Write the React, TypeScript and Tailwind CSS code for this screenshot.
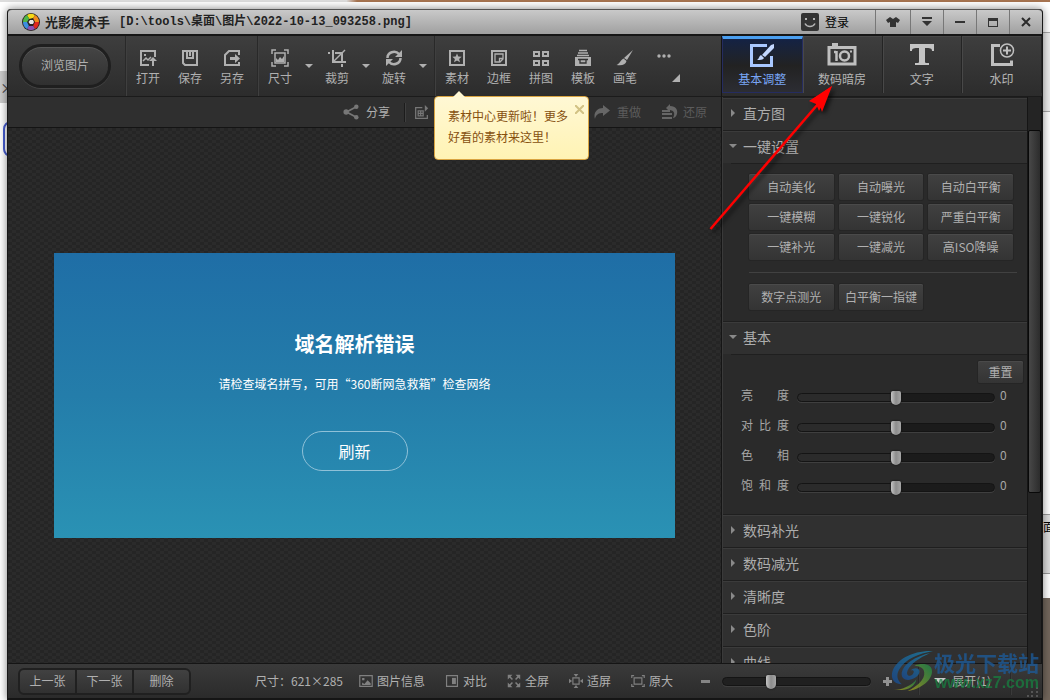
import type { ReactNode } from "react";

const font = "font-['Noto_Sans_CJK_SC','Liberation_Sans',sans-serif]";

function Glyph({ children, size = 18, className = "" }: { children: ReactNode; size?: number; className?: string }) {
  return (
    <svg width={size} height={size} viewBox="0 0 18 18" fill="none" stroke="currentColor" strokeWidth="2" className={className} aria-hidden="true">
      {children}
    </svg>
  );
}

const icons: Record<string, ReactNode> = {
  打开: (
    <>
      <path d="M10 16H2V2h14v6" />
      <path d="M4 12l3-3 2 2 3-3" strokeWidth="1.5" />
      <path d="M5 5h2v2H5zM14 8l4 4h-3v5h-2v-5h-3z" fill="currentColor" stroke="none" />
    </>
  ),
  保存: (
    <>
      <path d="M2 2h14v14H4l-2-2z" />
      <path d="M6 2v7h6V2M9 3v4" />
    </>
  ),
  另存: (
    <>
      <path d="M16 6V2H6L2 6v10h14v-3" />
      <path d="M7 8h5V5l5 4.500-5 4.500v-3H7z" fill="currentColor" stroke="none" />
    </>
  ),
  尺寸: (
    <>
      <path d="M1 5V1h4M13 1h4v4M17 13v4h-4M5 17H1v-4" strokeWidth="1.500" />
      <path d="M4 4h10v10H4z" strokeWidth="1.500" />
      <path d="M5 13V9l2 2 2-3 2 2 2-3v6z" fill="currentColor" stroke="none" />
    </>
  ),
  裁剪: (
    <>
      <path d="M0 4h2M5 1v12h13M7 4h7v9M14 15v3" />
      <path d="M5 13L17 1" strokeWidth="1.500" />
    </>
  ),
  旋转: (
    <>
      <path d="M2.500 9A6.500 6 0 0 1 14 5M15.500 9A6.500 6 0 0 1 4 13" strokeWidth="2.500" />
      <path d="M17 1v7h-7zM1 17v-7h7z" fill="currentColor" stroke="none" />
    </>
  ),
  素材: (
    <>
      <path d="M2 2h14v14H2z" />
      <path d="M9 4.500l1.300 3.100 3.400.2-2.600 2.200.9 3.300L9 11.500l-3 1.800.9-3.300-2.600-2.200 3.400-.2z" fill="currentColor" stroke="none" />
    </>
  ),
  边框: (
    <>
      <path d="M2 2h14v14H2z" />
      <path d="M5 13V5h8v5l-3 3zM13 9.500h-3.500V13" strokeWidth="1.300" />
    </>
  ),
  拼图: <path d="M2 3h5v4H2zM11 3h5v4h-5zM2 12h5v4H2zM11 12h5v4h-5z" />,
  模板: (
    <>
      <path d="M5 1.500h8M4 4h10M3 6.500h12" strokeWidth="1.500" />
      <path d="M1 8h16v9H1z" fill="currentColor" stroke="none" />
      <path d="M4 10.500h10M6 11v3h6v-3" stroke="#333" strokeWidth="1.300" />
    </>
  ),
  画笔: <path d="M17 1l-6 10-3-2zM7.500 9.500l3 2.500c-1 4-5 5-10 4 3-1 4-5 7-6.500z" fill="currentColor" stroke="none" />,
};

function Caret() {
  return <span className="h-0 w-0 border-x-4 border-t-4 border-x-transparent border-t-[#b0b0b0]" />;
}

function Tool({ name, menu }: { name: string; menu?: boolean }) {
  return (
    <div className="flex items-center">
      <button className="flex w-[42px] flex-col items-center gap-[3px] pt-[3px]">
        <Glyph>{icons[name]}</Glyph>
        <span className="leading-4">{name}</span>
      </button>
      {menu && (
        <button aria-label={`${name}选项`} className="flex w-[15px] justify-center">
          <Caret />
        </button>
      )}
    </div>
  );
}

function Divider() {
  return <span className="mx-px h-full w-px bg-[#292929] shadow-[1px_0_0_#3f3f3f]" />;
}

function TitleBar() {
  const cell = "flex items-center justify-center border-l border-[#777]";
  return (
    <header className="flex h-[27px] shrink-0 items-stretch rounded-t border-t border-b-2 border-t-[#555] border-b-[#161616] bg-linear-to-b from-[#c9c9c9] to-[#a0a0a0] text-[#222]">
      <div className="flex flex-1 items-center pb-px pl-[14px]">
        <svg width="18" height="18" viewBox="0 0 18 18" aria-hidden="true">
          <circle cx="9" cy="9" r="9" fill="#2a2420" />
          <path d="M9 9L5 2a8 8 0 0 1 8 0z" fill="#f5d916" />
          <path d="M9 9l4-7a8 8 0 0 1 4 7z" fill="#f08a1c" />
          <path d="M9 9h8a8 8 0 0 1-4 7z" fill="#e0271f" />
          <path d="M9 9l4 7a8 8 0 0 1-8 0z" fill="#8a52b5" />
          <path d="M9 9l-4 7a8 8 0 0 1-4-7z" fill="#3d8ee0" />
          <path d="M9 9H1a8 8 0 0 1 4-7z" fill="#4fb648" />
          <path d="M7 6l4-1 2 4-2 4H7L5 9z" fill="#29221f" />
          <path d="M8 7h3l1 2-1 2H8L6.500 9z" fill="#e6e6e6" />
        </svg>
        <h1 className="ml-[5px] text-[13px] font-bold">光影魔术手</h1>
        <span className="ml-[9px] font-['Liberation_Mono','Noto_Sans_CJK_SC',monospace] text-[12px] font-bold whitespace-nowrap">
          [D:\tools\桌面\图片\2022-10-13_093258.png]
        </span>
      </div>
      <button className="mr-[26px] flex items-center gap-[6px] text-[12px] text-black">
        <svg width="18" height="18" viewBox="0 0 18 18" aria-hidden="true">
          <rect width="18" height="18" rx="2" fill="#343434" />
          <path d="M4 5h2v2H4zM12 5h2v2h-2z" fill="#b5b5b5" />
          <path d="M4 10.500c2 4 8 4 10 0" fill="none" stroke="#b5b5b5" strokeWidth="1.500" />
        </svg>
        登录
      </button>
      <button aria-label="换肤" className={`w-[35px] ${cell}`}>
        <svg width="14" height="10" viewBox="0 0 14 10" aria-hidden="true">
          <path d="M4 0l3 2 3-2 4 3-2 3-2-1v5H4V5L2 6 0 3z" fill="#333" />
        </svg>
      </button>
      <button aria-label="菜单" className={`w-[33px] ${cell}`}>
        <svg width="12" height="10" viewBox="0 0 12 10" aria-hidden="true">
          <path d="M1 0h10v2H1zM1 4h10L6 9z" fill="#333" />
        </svg>
      </button>
      <button aria-label="最小化" className={`w-[33px] ${cell}`}>
        <span className="h-[2px] w-[10px] bg-[#333]" />
      </button>
      <button aria-label="最大化" className={`w-[33px] ${cell}`}>
        <span className="h-[9px] w-[10px] border border-t-[3px] border-[#333]" />
      </button>
      <button aria-label="关闭" className={`w-[33px] ${cell}`}>
        <svg width="10" height="10" viewBox="0 0 10 10" aria-hidden="true">
          <path d="M1 1l8 8M9 1L1 9" stroke="#2b2b2b" strokeWidth="2" />
        </svg>
      </button>
    </header>
  );
}

function Toolbar() {
  return (
    <nav className="relative flex h-[61px] shrink-0 items-stretch border-b border-[#1b1b1b] bg-linear-to-b from-[#3e3e3e] to-[#2c2c2c] text-[12px] text-[#b0b0b0]">
      <div className="flex w-[116px] items-center pl-[11px]">
        <button className="h-[44px] w-[92px] rounded-full border-[3px] border-[#1f1f1f] bg-linear-to-b from-[#454545] to-[#303030] pb-[2px] shadow-[0_1px_0_#454545,inset_0_1px_0_#575757]">
          浏览图片
        </button>
      </div>
      <Divider />
      <div className="flex">
        <Tool name="打开" />
        <Tool name="保存" />
        <Tool name="另存" />
      </div>
      <span className="w-[3px]" />
      <Divider />
      <div className="flex">
        <Tool name="尺寸" menu />
        <Tool name="裁剪" menu />
        <Tool name="旋转" menu />
      </div>
      <span className="w-[3px]" />
      <Divider />
      <div className="flex">
        <Tool name="素材" />
        <Tool name="边框" />
        <Tool name="拼图" />
        <Tool name="模板" />
        <Tool name="画笔" />
      </div>
      <button aria-label="更多" className="flex w-9 flex-col items-center gap-5 pt-[18px]">
        <svg width="14" height="4" viewBox="0 0 14 4" fill="currentColor" aria-hidden="true">
          <circle cx="2" cy="2" r="1.700" />
          <circle cx="7" cy="2" r="1.700" />
          <circle cx="12" cy="2" r="1.700" />
        </svg>
        <svg width="8" height="8" viewBox="0 0 8 8" fill="currentColor" className="-mt-1 -mr-6" aria-hidden="true">
          <path d="M8 0v8H0z" />
        </svg>
      </button>
      <div role="status" className="absolute top-[60px] left-[426px] z-10 h-16 w-[155px] rounded-sm border border-[#d9a441] bg-linear-to-b from-[#fff8d4] to-[#fff3b4] px-[13px] pt-2 leading-[21px] whitespace-nowrap text-[#86500f]">
        <svg width="14" height="7" viewBox="0 0 14 7" className="absolute -top-[6px] left-[17px]" aria-hidden="true">
          <path d="M0 7l7-7 7 7z" fill="#fff8d4" />
        </svg>
        素材中心更新啦！更多
        <br />
        好看的素材来这里！
        <button aria-label="关闭提示" className="absolute top-[3px] right-1">
          <svg width="9" height="9" viewBox="0 0 9 9" className="my-[5px]" aria-hidden="true">
            <path d="M0 0l9 9M9 0L0 9" stroke="#d2c284" strokeWidth="2" />
          </svg>
        </button>
      </div>
    </nav>
  );
}

function ShareBar() {
  return (
    <div className="flex h-[31px] shrink-0 items-center border-b border-[#141414] bg-[#2f2f2f] text-[12px] text-[#5c5c5c]">
      <div className="ml-auto flex items-center pr-[14px]">
        <button className="flex items-center gap-[7px] text-[#b0b0b0]">
          <Glyph size={16} className="text-[#777]">
            <path d="M15 3L4 9l11 6" />
            <circle cx="3.500" cy="9" r="3" fill="currentColor" stroke="none" />
            <circle cx="15" cy="3" r="2.500" fill="currentColor" stroke="none" />
            <circle cx="15" cy="15" r="2.500" fill="currentColor" stroke="none" />
          </Glyph>
          分享
        </button>
        <span className="mr-[9px] ml-[14px] h-[19px] w-px bg-[#1c1c1c] shadow-[1px_0_0_#3f3f3f]" />
        <button aria-label="画布" className="mr-[165px]">
          <Glyph size={15} className="text-[#777]">
            <path d="M10 3H2v13h14v-4M5 7h6v6H5zM8 7v6M5 10h6" strokeWidth="1.500" />
            <path d="M13 0l4 4-4 4z" fill="currentColor" stroke="none" />
          </Glyph>
        </button>
        <button className="flex items-center gap-[7px]">
          <svg width="16" height="14" viewBox="0 0 16 14" fill="#666" aria-hidden="true">
            <path d="M9 0l7 5.500L9 11V8C5 8 2 9 1 14-1 8 3 3 9 3z" />
          </svg>
          重做
        </button>
        <button className="ml-5 flex items-center gap-[5px]">
          <svg width="17" height="16" viewBox="0 0 17 16" fill="#666" aria-hidden="true">
            <path d="M1 6h8v2H1zM1 9h10v2H1zM1 13h10v2H1zM9 0v2c6 0 8 4 7 8-1 3-3 4-4 4 2-4 2-7-3-8v2L5 4z" />
          </svg>
          还原
        </button>
      </div>
    </div>
  );
}

function Canvas() {
  return (
    <div className="flex min-h-0 flex-1 items-center justify-center bg-[#282828] bg-[conic-gradient(#2b2b2b_25%,#252525_0_50%,#2b2b2b_0_75%,#252525_0)] bg-size-[8px_6px]">
      <div className="flex h-[285px] w-[621px] flex-col items-center bg-linear-to-b from-[#1f6ea6] via-[#247daa] to-[#2a92b4] pt-[77px] pr-5 text-white">
        <h2 className="text-[20px] leading-7 font-bold">域名解析错误</h2>
        <p className="mt-4 text-[12px] leading-5">请检查域名拼写，可用“360断网急救箱”检查网络</p>
        <button className="mt-[37px] h-10 w-[106px] rounded-full border border-[#8fc1d8] pb-px text-[16px]">刷新</button>
      </div>
    </div>
  );
}

function Tabs() {
  const tab = "flex flex-1 flex-col items-center gap-[3px] border-r border-[#242424] pt-[7px] leading-4 shadow-[inset_1px_1px_0_#484848]";
  return (
    <div role="tablist" className="flex h-[61px] shrink-0 border-b border-[#1b1b1b] bg-linear-to-b from-[#3e3e3e] to-[#2c2c2c] pb-[3px] text-[12px] text-[#b5b5b5]">
      <button role="tab" aria-selected="true" className="flex flex-1 flex-col items-center gap-[3px] border border-t-[3px] border-[#252c60] border-t-[#4a9ff0] bg-linear-to-b from-[#142244] via-[#222] to-[#2c2d33] pt-1 leading-4 text-[#78a5f5]">
        <svg width="26" height="25" viewBox="0 0 26 25" fill="none" aria-hidden="true">
          <path d="M18 2.500H2.500v20h20V13" stroke="#a9c8ff" strokeWidth="3" />
          <path d="M25 1v4l-9 9-3-2L22 2zM12 12l3 3c-1 2-4 2-7 2 2-1 2-4 4-5z" fill="#c3d8ff" />
        </svg>
        基本调整
      </button>
      <button role="tab" aria-selected="false" className={tab}>
        <svg width="30" height="25" viewBox="0 0 30 25" fill="none" stroke="#bfbfbf" aria-hidden="true">
          <path d="M2 4.500h26v16.500H2z" strokeWidth="3" />
          <path d="M5 1.500h6" strokeWidth="3" />
          <path d="M9.500 8v10M7 9h2" strokeWidth="2.500" />
          <circle cx="17.500" cy="13" r="4.500" strokeWidth="2.500" />
          <path d="M23 8.500h2" strokeWidth="2" />
        </svg>
        数码暗房
      </button>
      <button role="tab" aria-selected="false" className={tab}>
        <svg width="24" height="25" viewBox="0 0 24 25" fill="#c4c4c4" aria-hidden="true">
          <path d="M0 1h24v7h-2c0-3-2-3-7-3v14c0 1 1 1 4 1v2H5v-2c3 0 4 0 4-1V5C4 5 2 5 2 8H0z" />
        </svg>
        文字
      </button>
      <button role="tab" aria-selected="false" className={tab}>
        <svg width="26" height="25" viewBox="0 0 26 25" fill="none" stroke="#bfbfbf" aria-hidden="true">
          <path d="M11 2.500H3.500V21.500H22.500v-4" strokeWidth="3" />
          <circle cx="18" cy="7.500" r="6.500" strokeWidth="1.500" />
          <path d="M18 3.500v8M14 7.500h8" strokeWidth="2" />
        </svg>
        水印
      </button>
    </div>
  );
}

function Section({ title, children }: { title: string; children?: ReactNode }) {
  return (
    <section className="shrink-0 border-l border-[#3a3a3a]">
      <button aria-expanded={!!children} className="flex h-[33px] w-full items-center border-t border-[#1f1f1f] bg-[#303030] pb-[2px] text-[14px] text-[#adadad] shadow-[inset_0_1px_0_#3b3b3b]">
        <span className="flex w-[20px] justify-center">
          {children ? (
            <span className="h-0 w-0 border-x-4 border-t-4 border-x-transparent border-t-[#8a8a8a]" />
          ) : (
            <span className="h-0 w-0 border-y-4 border-l-4 border-y-transparent border-l-[#8a8a8a]" />
          )}
        </span>
        {title}
      </button>
      {children && <div className="ml-2 border-t border-[#1f1f1f] bg-[#2a2a2a]">{children}</div>}
    </section>
  );
}

const presets = ["自动美化", "自动曝光", "自动白平衡", "一键模糊", "一键锐化", "严重白平衡", "一键补光", "一键减光", "高ISO降噪"];
const manual = ["数字点测光", "白平衡一指键"];
const levels = ["亮度", "对比度", "色相", "饱和度"];

const panelButton = "rounded-xs bg-linear-to-b from-[#414141] to-[#343434] text-[12px] text-[#b0b0b0] shadow-[0_0_0_1px_#252525,inset_0_1px_0_#4a4a4a]";

const slider =
  "appearance-none rounded-full bg-transparent [&::-webkit-slider-thumb]:-mt-[3px] [&::-webkit-slider-thumb]:h-[14px] [&::-webkit-slider-thumb]:w-[10px] [&::-webkit-slider-thumb]:appearance-none [&::-webkit-slider-thumb]:rounded-t-xs [&::-webkit-slider-thumb]:rounded-b-[5px] [&::-webkit-slider-thumb]:bg-linear-to-r [&::-webkit-slider-thumb]:from-[#c4c4c4] [&::-webkit-slider-thumb]:via-[#8c8c8c] [&::-webkit-slider-thumb]:to-[#a6a6a6] [&::-webkit-slider-thumb]:shadow-[0_0_2px_#111] [&::-webkit-slider-runnable-track]:h-[9px] [&::-webkit-slider-runnable-track]:rounded-full [&::-webkit-slider-runnable-track]:border [&::-webkit-slider-runnable-track]:border-[#141414] [&::-webkit-slider-runnable-track]:shadow-[0_1px_0_#3f3f3f]";
const splitTrack =
  "[&::-webkit-slider-runnable-track]:bg-linear-to-r [&::-webkit-slider-runnable-track]:from-[#2b2b2b] [&::-webkit-slider-runnable-track]:from-50% [&::-webkit-slider-runnable-track]:to-[#1b1b1b] [&::-webkit-slider-runnable-track]:to-50%";
const plainTrack = "[&::-webkit-slider-runnable-track]:bg-[#202020]";

function SidePanel() {
  return (
    <div className="flex min-h-0 flex-1">
      <div className="flex min-w-0 flex-1 flex-col overflow-hidden">
        <Section title="直方图" />
        <Section title="一键设置">
          <div className="pt-[10px] pr-[10px] pb-[11px] pl-[18px]">
            <div className="grid auto-rows-[26px] grid-cols-3 gap-x-[5px] gap-y-1 pr-1">
              {presets.map((name) => (
                <button key={name} className={panelButton}>
                  {name}
                </button>
              ))}
            </div>
            <hr className="mt-3 mb-[11px] border-[#414141]" />
            <div className="grid auto-rows-[26px] grid-cols-3 gap-x-[5px] pr-1">
              {manual.map((name) => (
                <button key={name} className={panelButton}>
                  {name}
                </button>
              ))}
            </div>
          </div>
        </Section>
        <Section title="基本">
          <div className="flex flex-col pt-[6px] pb-[11px] pl-[10px] text-[12px] text-[#a6a6a6]">
            <button className={`mr-1 h-[22px] w-[45px] self-end ${panelButton}`}>重置</button>
            {levels.map((name) => (
              <div key={name} className="mb-[6px] flex h-6 items-center">
                <label htmlFor={name} aria-label={name} className="flex w-12 justify-between">
                  {[...name].map((char) => (
                    <span key={char}>{char}</span>
                  ))}
                </label>
                <input id={name} type="range" min={-100} max={100} defaultValue={0} className={`mt-1 ml-2 h-[14px] min-w-0 flex-1 ${slider} ${splitTrack}`} />
                <output htmlFor={name} className="w-8 pl-[5px]">
                  0
                </output>
              </div>
            ))}
          </div>
        </Section>
        <Section title="数码补光" />
        <Section title="数码减光" />
        <Section title="清晰度" />
        <Section title="色阶" />
        <Section title="曲线" />
      </div>
      <div className="w-[15px] border-x border-[#151515] bg-[#242424] pt-[33px]">
        <div className="h-[363px] rounded-xs border border-[#090909] bg-linear-to-r from-[#484848] to-[#2c2c2c]" />
      </div>
    </div>
  );
}

function StatusItem({ name, children }: { name: string; children: ReactNode }) {
  return (
    <button className="flex items-center gap-1">
      <Glyph size={14} className="text-[#808080]">
        {children}
      </Glyph>
      {name}
    </button>
  );
}

function StatusBar() {
  return (
    <footer className="relative flex h-[37px] shrink-0 items-center border-t border-b-2 border-[#151515] bg-linear-to-b from-[#3a3a3a] to-[#2b2b2b] text-[12px] text-[#b0b0b0]">
      <div className="ml-[10px] flex h-[27px] w-[173px] overflow-hidden rounded-md border-2 border-[#202020] bg-linear-to-b from-[#414141] to-[#313131]">
        <button className="flex-1 border-r-2 border-[#202020]">上一张</button>
        <button className="flex-1 border-r-2 border-[#202020]">下一张</button>
        <button className="flex-1">删除</button>
      </div>
      <span className="ml-16 w-[104px]">尺寸：621×285</span>
      <div className="flex items-center gap-5">
        <StatusItem name="图片信息">
          <path d="M1 2h16v14H1z" strokeWidth="1.500" />
          <path d="M4 14V11l3 2 4-5 4 4v2zM4 5h3v3H4z" fill="currentColor" stroke="none" />
        </StatusItem>
        <StatusItem name="对比">
          <path d="M2 2h14v14H2z" strokeWidth="1.500" />
          <path d="M9 5h5v8H9z" fill="currentColor" stroke="none" />
        </StatusItem>
        <StatusItem name="全屏">
          <path d="M7 7L2 2M11 7l5-5M7 11l-5 5M11 11l5 5" />
          <path d="M1 1h6L1 7zM17 1v6l-6-6zM1 17v-6l6 6zM17 17h-6l6-6z" fill="currentColor" stroke="none" />
        </StatusItem>
        <StatusItem name="适屏">
          <path d="M5 5h8v8H5z" strokeWidth="1.500" />
          <path d="M6 0h6L9 4zM6 18h6l-3-4zM0 6v6l4-3zM18 6v6l-4-3z" fill="currentColor" stroke="none" />
        </StatusItem>
        <StatusItem name="原大">
          <path d="M1 5V2h3M14 2h3v3M17 13v3h-3M4 16H1v-3M4 5h10v8H4z" strokeWidth="1.500" />
        </StatusItem>
      </div>
      <div className="ml-auto flex items-center pr-[31px]">
        <button aria-label="缩小" className="h-[3px] w-[9px] bg-[#858585]" />
        <input type="range" aria-label="缩放" min={0} max={100} defaultValue={31} className={`mx-3 h-[14px] w-[149px] ${slider} ${plainTrack}`} />
        <button aria-label="放大">
          <svg width="9" height="9" viewBox="0 0 9 9" aria-hidden="true">
            <path d="M0 4.500h9M4.500 0v9" stroke="#929292" strokeWidth="3" />
          </svg>
        </button>
        <span className="mr-[15px] ml-[26px] h-7 w-px bg-[#292929] shadow-[1px_0_0_#3a3a3a]" />
        <button className="flex items-center gap-[6px] pr-[19px]">
          <span className="h-0 w-0 border-x-[6px] border-t-[6px] border-x-transparent border-t-[#c8c8c8]" />
          展开(1)
        </button>
        <span className="h-7 w-px bg-[#292929] shadow-[1px_0_0_#3a3a3a]" />
      </div>
      <svg width="11" height="11" viewBox="0 0 11 11" className="absolute right-1 bottom-0" fill="#555" aria-hidden="true">
        <path d="M9 0h2v2H9zM4 4h2v2H4zM9 4h2v2H9zM0 8h2v2H0zM4 8h2v2H4zM9 8h2v2H9z" />
      </svg>
    </footer>
  );
}

function Backdrop() {
  return (
    <div className="absolute inset-0" aria-hidden="true">
      <div className="h-[2px] w-full bg-linear-to-r from-[#ddd] from-33% to-[#a67350] to-34%" />
      <div className="absolute top-[71px] left-0 h-8 w-2 bg-[#ccc] pt-2 text-[14px] leading-4 text-[#444]">×</div>
      <div className="absolute top-[121px] left-[3px] h-9 w-5 rounded-lg border-2 border-[#465dd0]" />
      <div className="absolute top-8 right-0 h-20 w-[7px] border-y border-[#aaa] bg-[#ededed]" />
      <div className="absolute top-[514px] right-0 h-[60px] w-[7px] overflow-hidden border-y border-[#999] bg-[#ddd] pt-1 text-[12px] leading-4 text-black">面</div>
      <div className="absolute top-[598px] right-0 bottom-0 w-[7px] bg-[#73675c]" />
    </div>
  );
}

function Annotation() {
  return (
    <svg width="128" height="152" viewBox="0 0 128 152" className="pointer-events-none absolute top-[84px] left-[708px] z-20 drop-shadow-[3px_3px_2px_rgba(0,0,0,0.6)]" aria-hidden="true">
      <path d="M2.500 145L110 20" stroke="#f00" strokeWidth="2.500" />
      <path d="M124 2L102 17l9 2 3 9z" fill="#f00" />
      <path d="M124 2l-13 25-3-7-7-3z" fill="#f00" />
    </svg>
  );
}

function Watermark() {
  return (
    <div className="pointer-events-none absolute right-[11px] bottom-[7px] z-20 flex items-center opacity-75">
      <svg width="43" height="43" viewBox="0 0 44 44" aria-hidden="true">
        <defs>
          <linearGradient id="swoosh" x1="0" y1="1" x2="1" y2="0">
            <stop offset="0" stopColor="#174b95" />
            <stop offset="1" stopColor="#1b86b0" />
          </linearGradient>
          <linearGradient id="leaf" x1="0" y1="1" x2="1" y2="0">
            <stop offset="0" stopColor="#b0a51e" />
            <stop offset="1" stopColor="#188d4a" />
          </linearGradient>
        </defs>
        <path d="M43 1C24 0 4 9 1 24c-1 7 4 11 10 11-5-4-6-10-2-16C15 9 28 4 43 1z" fill="url(#swoosh)" />
        <path d="M40 3C24 7 13 14 11 23c-1 6 4 9 10 7 6-2 9-6 8-9-1-3-6-3-9 0 4-1 4 2 2 4-3 3-7 1-5-4C20 14 29 8 40 3z" fill="url(#swoosh)" />
        <path d="M24 16c8-3 18-2 18 6 0 10-14 19-25 20 10-5 18-12 17-19 0-4-4-7-10-7z" fill="url(#leaf)" />
        <path d="M3 41c8 0 19-5 23-11-1 7-9 11-15 11z" fill="url(#leaf)" />
      </svg>
      <div className="text-right">
        <p className="text-[21px] leading-[22px] font-bold text-[#1c5c9c]">极光下载站</p>
        <p className="font-['Liberation_Sans',sans-serif] text-[16px] leading-5 font-bold text-[#178040]">www.xz7.com</p>
      </div>
    </div>
  );
}

export default function App() {
  return (
    <main lang="zh-CN" className={`relative flex h-screen overflow-hidden bg-white px-[7px] pt-[9px] ${font}`}>
      <Backdrop />
      <div className="relative flex min-w-0 flex-1 flex-col rounded-t border-x border-[#181818] bg-[#2a2a2a] shadow-[0_0_8px_rgba(0,0,0,0.5)]">
        <TitleBar />
        <div className="flex min-h-0 flex-1">
          <div className="flex min-w-0 flex-1 flex-col">
            <Toolbar />
            <ShareBar />
            <Canvas />
          </div>
          <aside className="flex w-[321px] shrink-0 flex-col border-l border-[#151515]">
            <Tabs />
            <SidePanel />
          </aside>
        </div>
        <StatusBar />
      </div>
      <Annotation />
      <Watermark />
    </main>
  );
}
